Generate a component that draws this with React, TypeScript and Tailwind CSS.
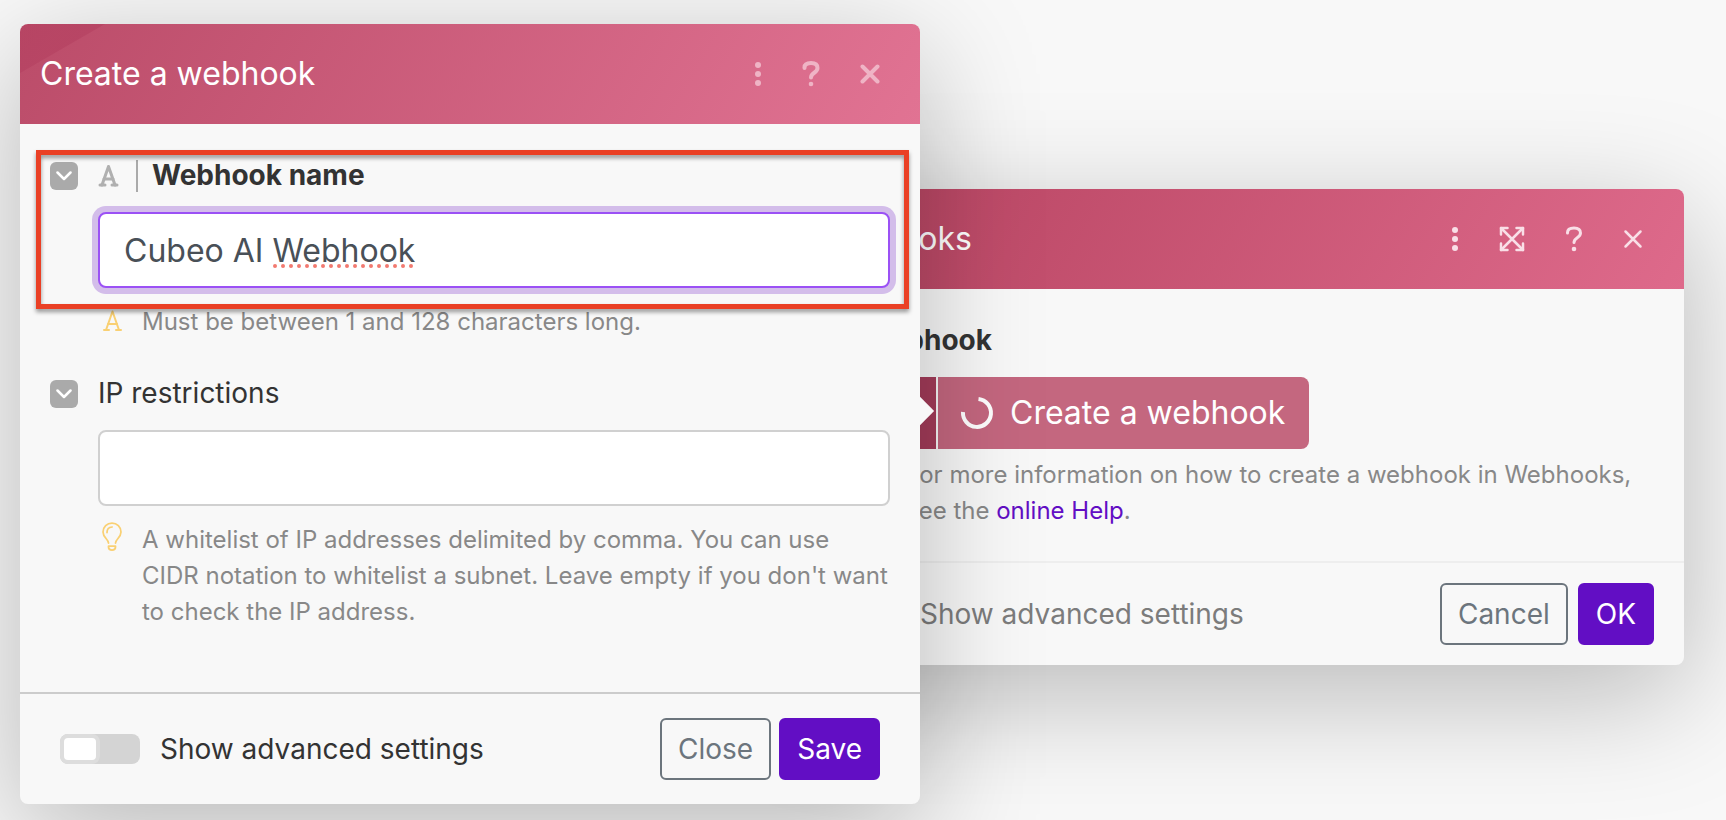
import React from "react";

interface IconProps {
    className?: string;
    strokeWidth?: number;
}

interface HeaderProps {
    title: string;
    tone: string;
    children: React.ReactNode;
}

interface ButtonProps {
    name: string;
    isPrimary?: boolean;
}

interface HintProps {
    icon: React.ReactNode;
    children: React.ReactNode;
}

function DotsIcon() {
    return (
        <svg width="8" height="24" viewBox="0 0 8 24" fill="currentColor">
            <circle cx="4" cy="3" r="3" />
            <circle cx="4" cy="12" r="3" />
            <circle cx="4" cy="21" r="3" />
        </svg>
    );
}

function HelpIcon({ strokeWidth = 3 }: IconProps) {
    return (
        <svg width="18" height="28" viewBox="0 0 18 28" fill="none" stroke="currentColor" strokeWidth={strokeWidth} strokeLinecap="round" strokeLinejoin="round">
            <path d="M2.500 8V7.500C2.500 4.500 5 3 9 3s6.500 1.500 6.500 5c0 5-6.500 4.500-6.500 9.500" />
            <circle cx="9" cy="24" r="2.300" fill="currentColor" stroke="none" />
        </svg>
    );
}

function CloseIcon({ strokeWidth = 2.5 }: IconProps) {
    return (
        <svg width="20" height="20" viewBox="0 0 20 20" fill="none" stroke="currentColor" strokeWidth={strokeWidth} strokeLinecap="round">
            <path d="M2.500 2.500l15 15M17.500 2.500l-15 15" />
        </svg>
    );
}

function ExpandIcon() {
    return (
        <svg width="26" height="26" viewBox="0 0 26 26" fill="none" stroke="currentColor" strokeWidth="2.500" strokeLinecap="round" strokeLinejoin="round">
            <path d="M2 2l22 22M24 2L2 24" />
            <path d="M2 8.500V2h6.500M17.500 2H24v6.500M24 17.500V24h-6.500M8.500 24H2v-6.500" />
        </svg>
    );
}

function TextTypeIcon({ className, strokeWidth = 3 }: IconProps) {
    return (
        <svg className={className} width="22" height="22" viewBox="0 0 22 22" fill="none" stroke="currentColor" strokeWidth={strokeWidth} strokeLinecap="round" strokeLinejoin="round">
            <polyline points="4,20 10.500,1.500 17,20" />
            <line x1="6" y1="14" x2="15" y2="14" />
            <line x1="2" y1="20" x2="7" y2="20" />
            <line x1="14" y1="20" x2="19" y2="20" />
        </svg>
    );
}

function BulbIcon({ className }: IconProps) {
    return (
        <svg className={className} width="20" height="30" viewBox="0 0 20 30" fill="none" stroke="currentColor" strokeWidth="1.750" strokeLinecap="round" strokeLinejoin="round">
            <path d="M6.500 21C6.500 17.500 1 15.500 1 10a9 9 0 0 1 18 0c0 5.500-5.500 7.500-5.500 11" />
            <path d="M5 10.500c0-3 2-5.300 5-5.500" />
            <path d="M6.500 24h7v1c0 2-1.500 3-3.500 3s-3.500-1-3.500-3z" />
        </svg>
    );
}

function SpinnerIcon() {
    return (
        <svg width="34" height="34" viewBox="0 0 34 34" fill="none" stroke="currentColor" strokeWidth="4">
            <path d="M18.500 3A14 14 0 1 1 3 16" />
        </svg>
    );
}

function PanelHeader({ title, tone, children }: HeaderProps) {
    return (
        <header className={`flex h-[100px] items-center justify-between rounded-t-lg ${tone}`}>
            <h2 className="text-[32px] leading-10 text-white">{title}</h2>
            <div className="flex items-center">{children}</div>
        </header>
    );
}

function ActionButton({ name, isPrimary }: ButtonProps) {
    return (
        <button
            className={`h-[62px] rounded-md border-2 px-4 text-[28px] leading-9
                ${isPrimary ? "border-[#620ec4] bg-[#620ec4] text-white" : "border-[#6c757d] text-[#6c757d]"}`}
        >
            {name}
        </button>
    );
}

function CollapseButton({ label }: { label: string }) {
    return (
        <button aria-label={label} className="flex size-7 items-center justify-center rounded-md bg-[#aaaaaa] text-white">
            <svg width="16" height="10" viewBox="0 0 16 10" fill="none" stroke="currentColor" strokeWidth="2.500" strokeLinecap="round" strokeLinejoin="round">
                <path d="M1.500 1.500L8 8l6.500-6.500" />
            </svg>
        </button>
    );
}

function Hint({ icon, children }: HintProps) {
    return (
        <div className="col-start-2 flex text-[24px] leading-9 text-[#888888]">
            <span className="w-11 shrink-0 pl-1">{icon}</span>
            <p>{children}</p>
        </div>
    );
}

function AdvancedSwitch({ id, tone }: { id: string; tone: string }) {
    return (
        <div className="flex items-center gap-5">
            <input id={id} type="checkbox" role="switch" className="peer sr-only" />
            <label
                htmlFor={id}
                className="flex h-[30px] w-20 rounded-lg bg-[#d4d4d4] peer-checked:justify-end"
            >
                <span className="w-10 rounded-lg border-4 border-[#dddddd] bg-white" />
            </label>
            <label htmlFor={id} className={`text-[28px] leading-9 ${tone}`}>
                Show advanced settings
            </label>
        </div>
    );
}

function WebhooksPanel() {
    return (
        <section className="mt-[165px] mr-[42px] -ml-[136px] min-w-0 flex-1 rounded-lg bg-[#f8f8f8] shadow-[0_30px_120px_rgba(0,0,0,0.26)]">
            <PanelHeader title="Webhooks" tone="pl-7 pr-[41px] bg-[linear-gradient(120deg,#b5425f,#de6a8b)]">
                <div className="flex items-center text-[#f9dfe7]">
                    <button aria-label="More"><DotsIcon /></button>
                    <button aria-label="Expand" className="ml-10"><ExpandIcon /></button>
                    <button aria-label="Help" className="ml-10"><HelpIcon /></button>
                    <button aria-label="Close" className="ml-10"><CloseIcon /></button>
                </div>
            </PanelHeader>

            <div className="pt-9 pr-[30px] pb-8 pl-[78px]">
                <h3 className="pb-0.5 text-[28px] leading-[30px] font-bold text-[#333333]">Webhook</h3>
                <div className="mt-5 flex h-[72px] text-white">
                    <button aria-label="Add" className="flex w-[74px] items-center justify-end rounded-l-lg bg-[#a43c5a] pr-3">
                        <SpinnerIcon />
                    </button>
                    <button className="ml-0.5 flex items-center gap-4 rounded-r-lg bg-[#c4677f] pr-6 pl-[22px] text-[32px] leading-10">
                        <SpinnerIcon />
                        Create a webhook
                    </button>
                </div>
                <div className="mt-2">
                    <Hint icon={<BulbIcon className="text-[#f9d073]" />}>
                        For more information on how to create a webhook in Webhooks, see the{" "}
                        <a href="#help" className="text-[#620ec4]">online Help</a>.
                    </Hint>
                </div>
            </div>

            <footer className="flex items-center justify-between border-t-2 border-[#eeeeee] py-5 pr-[30px] pl-9">
                <AdvancedSwitch id="webhooks-advanced" tone="text-[#7c7c7c]" />
                <div className="flex gap-2.5">
                    <ActionButton name="Cancel" />
                    <ActionButton name="OK" isPrimary />
                </div>
            </footer>
        </section>
    );
}

function CreateWebhookPanel() {
    return (
        <section className="relative z-10 w-[900px] shrink-0 rounded-lg bg-[#f8f8f8] shadow-[0_30px_120px_rgba(0,0,0,0.26)]">
            <PanelHeader
                title="Create a webhook"
                tone="pl-5 pr-10 bg-[linear-gradient(150deg,#b4406099_42px,transparent_43px),linear-gradient(120deg,#bb4c69,#e17393)]"
            >
                <div className="flex items-center text-[#efb4c5]">
                    <button aria-label="More"><DotsIcon /></button>
                    <button aria-label="Help" className="ml-10"><HelpIcon strokeWidth={4} /></button>
                    <button aria-label="Close" className="ml-10"><CloseIcon strokeWidth={4} /></button>
                </div>
            </PanelHeader>

            <div className="px-[30px] pt-9 pb-6">
                <div className="relative grid grid-cols-[28px_1fr] items-center gap-x-5">
                    <CollapseButton label="Collapse webhook name" />
                    <div className="flex h-8 items-center">
                        <TextTypeIcon className="text-[#b0b0b0]" />
                        <span className="mr-3.5 ml-4 h-8 w-0.5 bg-[#aaaaaa]" />
                        <label htmlFor="webhook-name" className="pb-0.5 text-[28px] leading-[30px] font-bold text-[#333333]">
                            Webhook name
                        </label>
                    </div>
                    <div className="relative col-start-2 mt-5">
                        <input
                            id="webhook-name"
                            defaultValue="Cubeo AI Webhook"
                            className="block h-[76px] w-full rounded-lg border-2 border-[#9b51f5] bg-white px-6 text-[32px] text-[#495057] ring-6 ring-[#d3bdea] outline-none"
                        />
                        {/* spell check marks under the last word */}
                        <svg className="pointer-events-none absolute bottom-5 left-[175px]" width="142" height="4" fill="none" stroke="#f27a70" strokeWidth="4" strokeLinecap="round" strokeDasharray="0 8">
                            <path d="M2 2H142" />
                        </svg>
                    </div>
                    {/* highlight frame */}
                    <div className="pointer-events-none absolute -top-2.5 -right-[19px] -bottom-[21px] -left-3.5 border-5 border-[#ea4025] drop-shadow-[0_3px_2px_rgba(0,0,0,0.4)]" />
                </div>
                <div className="mt-4 grid grid-cols-[28px_1fr] gap-x-5">
                    <Hint icon={<TextTypeIcon className="mt-1.5 text-[#f9d073]" strokeWidth={2} />}>
                        Must be between 1 and 128 characters long.
                    </Hint>
                </div>

                <div className="mt-[38px] grid grid-cols-[28px_1fr] items-center gap-x-5">
                    <CollapseButton label="Collapse IP restrictions" />
                    <label htmlFor="ip-restrictions" className="pb-0.5 text-[28px] leading-[30px] text-[#333333]">
                        IP restrictions
                    </label>
                    <input
                        id="ip-restrictions"
                        className="col-start-2 mt-5 block h-[76px] w-full rounded-lg border-2 border-[#d0d0d0] bg-white px-6 text-[32px] text-[#495057] outline-none"
                    />
                </div>
                <div className="mt-4 mb-[38px] grid grid-cols-[28px_1fr] gap-x-5">
                    <Hint icon={<BulbIcon className="text-[#f9d073]" />}>
                        A whitelist of IP addresses delimited by comma. You can use CIDR notation to whitelist a subnet.
                        Leave empty if you don't want to check the IP address.
                    </Hint>
                </div>
            </div>

            <footer className="flex items-center justify-between border-t-2 border-[#cccccc] px-10 py-6">
                <AdvancedSwitch id="create-advanced" tone="text-[#333333]" />
                <div className="flex gap-2">
                    <ActionButton name="Close" />
                    <ActionButton name="Save" isPrimary />
                </div>
            </footer>

            {/* pointer towards the button that opened this panel */}
            <span className="absolute top-[377px] -right-2.5 size-5 rotate-45 bg-[#f8f8f8]" />
        </section>
    );
}

export default function App() {
    return (
        <main className="flex min-h-screen items-start overflow-hidden bg-[#f8f8f8] pt-6 pl-5 font-['Inter',sans-serif]">
            <CreateWebhookPanel />
            <WebhooksPanel />
        </main>
    );
}
